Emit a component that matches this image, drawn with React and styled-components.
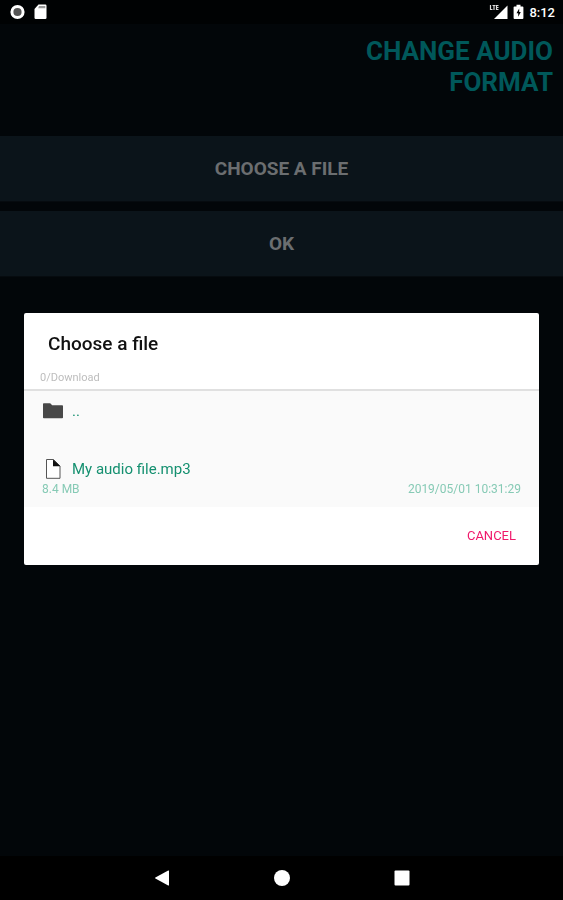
import React from 'react'
import styled, { createGlobalStyle } from 'styled-components'

const files = [
  { name: '..', type: 'folder' },
  { name: 'My audio file.mp3', type: 'file', size: '8.4 MB', date: '2019/05/01 10:31:29' },
]

function App() {
  return (
    <>
      <GlobalStyle />
      <Screen>
        <StatusBar>
          <StatusGroup $gap="9px">
            <RecordIcon />
            <CardIcon />
          </StatusGroup>
          <StatusGroup $gap="5px">
            <SignalIcon />
            <BatteryIcon />
            <Clock>8:12</Clock>
          </StatusGroup>
        </StatusBar>
        <Main>
          <Title>Change audio format</Title>
          <Actions>
            <ActionButton type="button">Choose a file</ActionButton>
            <ActionButton type="button">OK</ActionButton>
          </Actions>
        </Main>
        <NavBar>
          <NavButton type="button" aria-label="Back">
            <svg width="18" height="18" viewBox="0 0 18 18">
              <path d="M16 2v14q0 .9-.8.5L2.400 9.600q-.8-.6 0-1.200L15.200 1.500q.8-.4.8.5z" fill="#fff" />
            </svg>
          </NavButton>
          <NavButton type="button" aria-label="Home">
            <svg width="18" height="18" viewBox="0 0 18 18">
              <circle cx="9" cy="9" r="8" fill="#fff" />
            </svg>
          </NavButton>
          <NavButton type="button" aria-label="Recent apps">
            <svg width="18" height="18" viewBox="0 0 18 18">
              <rect x="1.5" y="1.5" width="15" height="15" rx="1" fill="#fff" />
            </svg>
          </NavButton>
        </NavBar>
      </Screen>
      <Overlay>
        <Dialog role="dialog" aria-labelledby="dialog-title">
          <DialogTitle id="dialog-title">Choose a file</DialogTitle>
          <Path>0/Download</Path>
          <FileList>
            {files.map((file) => (
              <FileRow key={file.name}>
                <FileName>
                  {file.type === 'folder' ? <FolderIcon /> : <PageIcon />}
                  <span>{file.name}</span>
                </FileName>
                {file.size && (
                  <FileMeta>
                    <span>{file.size}</span>
                    <span>{file.date}</span>
                  </FileMeta>
                )}
              </FileRow>
            ))}
          </FileList>
          <DialogActions>
            <CancelButton type="button">Cancel</CancelButton>
          </DialogActions>
        </Dialog>
      </Overlay>
    </>
  )
}

export default App

function RecordIcon() {
  return (
    <svg width="15" height="16" viewBox="0 0 15 16">
      <circle cx="7.5" cy="8" r="5.6" fill="#555" stroke="#fff" strokeWidth="3" />
    </svg>
  )
}

function CardIcon() {
  return (
    <svg width="13" height="16" viewBox="0 0 13 16">
      <path d="M4.5 .6h6.800q1.200 0 1.200 1.200v12q0 1.200-1.200 1.200H1.700q-1.200 0-1.200-1.200V5z" fill="#fff" />
      <path d="M5 2h6.300v2.300H4.200z" fill="#999" />
    </svg>
  )
}

function SignalIcon() {
  return (
    <svg width="19" height="16" viewBox="0 0 19 16">
      <path d="M18.500 1.500v13.500H5z" fill="#fff" />
      <path
        d="M1.500 1v4.500h2M3.500 1.500h3M5 1.500v4.500M9.500 1.500H7.500v4h2M7.500 3.500h2"
        fill="none"
        stroke="#ddd"
        strokeWidth="1.2"
      />
    </svg>
  )
}

function BatteryIcon() {
  return (
    <svg width="11" height="16" viewBox="0 0 11 16">
      <path d="M3.500 .8h4v1.600h2q.9 0 .9.900v10.800q0 .9-.9.900h-8q-.9 0-.9-.9V3.300q0-.9.9-.9h2z" fill="#fff" />
      <path d="M6.200 4.500L3.500 9.200h1.700v3.600l2.600-4.700H6.200z" fill="#000" />
    </svg>
  )
}

function FolderIcon() {
  return (
    <svg width="22" height="20" viewBox="0 0 22 20">
      <path d="M1 3q0-.8.8-.8h6.400l2 2h10q.8 0 .8.8v11.500q0 .8-.8.8H1.800q-.8 0-.8-.8z" fill="#484848" />
    </svg>
  )
}

function PageIcon() {
  return (
    <svg width="22" height="20" viewBox="0 0 22 20">
      <path d="M4.500 .5h7l6.500 6.500v12.300H4.500z" fill="#fff" stroke="#555" strokeWidth="1" />
      <path d="M11 .5l7.300 6.700H11z" fill="#111" />
    </svg>
  )
}

const GlobalStyle = createGlobalStyle`
  * {
    box-sizing: border-box;
  }
  body {
    margin: 0;
    background: #020609;
    font-family: Roboto, "Liberation Sans", sans-serif;
  }
  button {
    font-family: inherit;
    border: none;
    padding: 0;
    cursor: pointer;
  }
  svg {
    display: block;
    flex-shrink: 0;
  }
`
const Screen = styled.div`
  min-height: 100vh;
  display: flex;
  flex-direction: column;
`
const StatusBar = styled.header`
  height: 24px;
  padding: 0 8px 0 10px;
  display: flex;
  align-items: center;
  justify-content: space-between;
  background: #000203;
`
const StatusGroup = styled.div`
  display: flex;
  align-items: center;
  gap: ${props => props.$gap};
`
const Clock = styled.span`
  color: #fff;
  font-size: 13px;
  font-weight: 500;
`
const Main = styled.main`
  flex: 1;
`
const Title = styled.h1`
  width: 220px;
  margin: 0 0 0 auto;
  padding: 12px 10px 0 0;
  color: #00585a;
  font-size: 26px;
  font-weight: 700;
  line-height: 31px;
  text-align: right;
  text-transform: uppercase;
`
const Actions = styled.div`
  display: flex;
  flex-direction: column;
  gap: 9px;
  margin-top: 38px;
`
const ActionButton = styled.button`
  height: 66px;
  background: #0b141a;
  border-bottom: 1px solid #060b0f;
  color: #6b6e70;
  font-size: 19px;
  font-weight: 700;
  text-transform: uppercase;
`
const NavBar = styled.nav`
  height: 44px;
  display: flex;
  align-items: center;
  justify-content: center;
  gap: 72px;
  background: #000;
`
const NavButton = styled.button`
  width: 48px;
  height: 44px;
  display: flex;
  align-items: center;
  justify-content: center;
  background: transparent;
`
const Overlay = styled.div`
  position: fixed;
  inset: 0;
  padding: 22px 24px 44px;
  display: flex;
  align-items: center;
  justify-content: center;
`
const Dialog = styled.section`
  width: 100%;
  background: #fff;
  border-radius: 2px;
  overflow: hidden;
`
const DialogTitle = styled.h2`
  margin: 0;
  padding: 19px 24px 0;
  color: #111;
  font-size: 19px;
  font-weight: 500;
  line-height: 24px;
`
const Path = styled.p`
  margin: 0;
  padding: 14px 16px 3px;
  border-bottom: 2px solid #e0e0e0;
  color: #bdbdbd;
  font-size: 11px;
  line-height: 16px;
`
const FileList = styled.ul`
  margin: 0;
  padding: 0;
  list-style: none;
  background: #fafafa;
`
const FileRow = styled.li`
  min-height: 58px;
  padding: 10px 18px 8px;
`
const FileName = styled.div`
  display: flex;
  align-items: center;
  gap: 8px;
  color: #159070;
  font-size: 15px;
  line-height: 20px;
`
const FileMeta = styled.div`
  display: flex;
  justify-content: space-between;
  color: #86cab5;
  font-size: 12px;
  line-height: 20px;
`
const DialogActions = styled.div`
  display: flex;
  justify-content: flex-end;
  padding: 10px 15px 12px;
`
const CancelButton = styled.button`
  height: 36px;
  padding: 0 8px;
  background: transparent;
  color: #f0196b;
  font-size: 13px;
  text-transform: uppercase;
`
